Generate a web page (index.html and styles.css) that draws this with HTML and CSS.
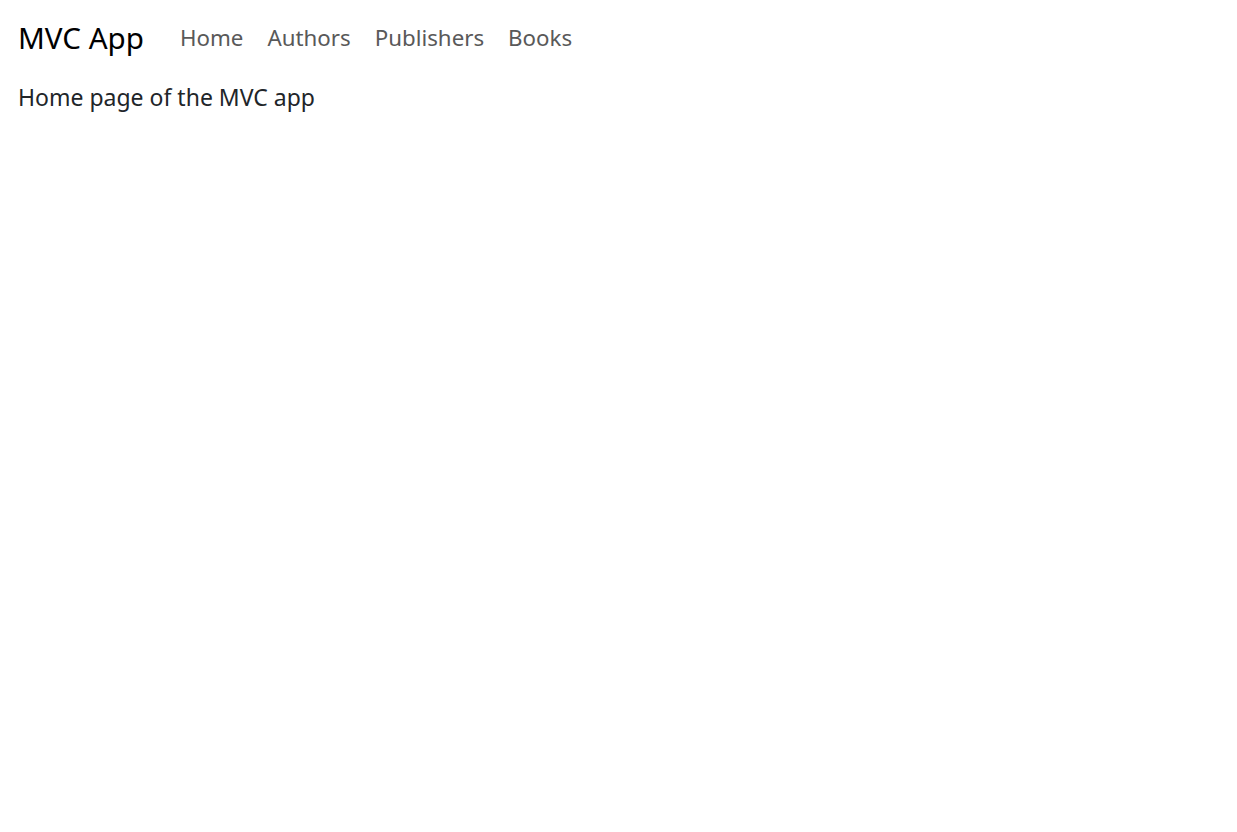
FILE: index.html
```html
<!DOCTYPE html>
<html lang="en">
<head>
<meta charset="utf-8">
<title>MVC App</title>
<link rel="stylesheet" href="styles.css">
</head>
<body>
<header>
  <nav class="navbar">
    <div class="container">
      <a class="brand" href="#">MVC App</a>
      <ul class="nav">
        <li><a class="nav-link" href="#">Home</a></li>
        <li><a class="nav-link" href="#">Authors</a></li>
        <li><a class="nav-link" href="#">Publishers</a></li>
        <li><a class="nav-link" href="#">Books</a></li>
      </ul>
    </div>
  </nav>
</header>
<main class="container main">
  <p class="lead-text">Home page of the MVC app</p>
</main>
</body>
</html>
```

FILE: styles.css
```css
* { box-sizing: border-box; }
html, body { margin: 0; padding: 0; background: #fff; }
body {
  font-family: "Noto Sans", "Open Sans", sans-serif;
  font-size: 23px;
  line-height: 1.5;
  color: #212529;
}
.container { padding: 0 18px; }
.navbar { padding: 10px 0 12px; }
.navbar .container { display: flex; align-items: center; }
.brand {
  font-size: 29.6px;
  color: #000;
  text-decoration: none;
  padding: 6px 0;
  margin-right: 24px;
  line-height: 1.5;
}
.nav { list-style: none; margin: 0; padding: 0; display: flex; }
.nav-link {
  display: block;
  padding: 8px 12px 8px 12px;
  font-size: 22.3px;
  color: #595959;
  text-decoration: none;
}
.nav li:first-child .nav-link { padding-left: 12px; }
.main { padding-top: 2px; }
.lead-text { margin: 0; }
```
